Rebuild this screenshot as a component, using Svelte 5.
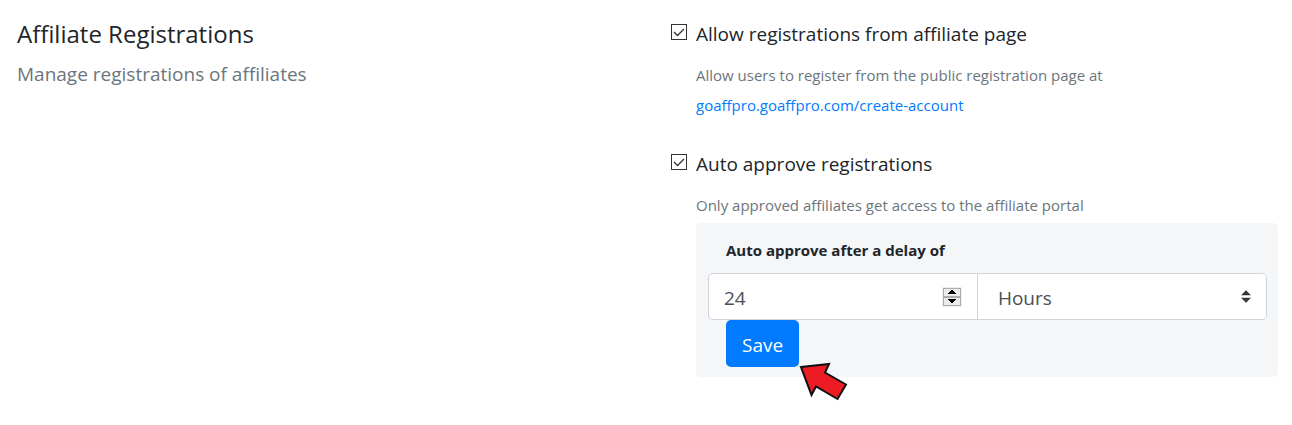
<script>
  let allowRegistrations = $state(true);
  let autoApprove = $state(true);
  let delay = $state(24);
  let unit = $state('hours');
</script>

<main class="settings">
  <section class="intro">
    <h1>Affiliate Registrations</h1>
    <p>Manage registrations of affiliates</p>
  </section>

  <form class="options" onsubmit={(event) => event.preventDefault()}>
    <div class="option">
      <input id="allow" class="check" type="checkbox" bind:checked={allowRegistrations} />
      <div class="body">
        <label class="title" for="allow">Allow registrations from affiliate page</label>
        <p class="hint">
          Allow users to register from the public registration page at<br />
          <a href="#create-account">goaffpro.goaffpro.com/create-account</a>
        </p>
      </div>
    </div>

    <div class="option">
      <input id="approve" class="check" type="checkbox" bind:checked={autoApprove} />
      <div class="body">
        <label class="title" for="approve">Auto approve registrations</label>
        <p class="hint">Only approved affiliates get access to the affiliate portal</p>
        <div class="panel">
          <label class="delay-label" for="delay">Auto approve after a delay of</label>
          <div class="group">
            <div class="number">
              <input id="delay" type="number" min="0" bind:value={delay} />
              <div class="spinner">
                <button type="button" aria-label="Increase" onclick={() => (delay += 1)}>
                  <svg viewBox="0 0 8 4" width="8" height="4"><path d="M3 0h2v1h1v1h1v1h1v1H0V3h1V2h1V1h1z" /></svg>
                </button>
                <button type="button" aria-label="Decrease" onclick={() => (delay = Math.max(0, delay - 1))}>
                  <svg viewBox="0 0 8 4" width="8" height="4"><path d="M0 0h8v1H7v1H6v1H5v1H3V3H2V2H1V1H0z" /></svg>
                </button>
              </div>
            </div>
            <div class="unit">
              <select aria-label="Delay unit" bind:value={unit}>
                <option value="hours">Hours</option>
                <option value="days">Days</option>
              </select>
              <svg class="caret" viewBox="0 0 4 5" width="10" height="13"><path d="M2 0L0 2h4zm0 5L0 3h4z" /></svg>
            </div>
          </div>
          <div class="action">
            <button class="save" type="submit">Save</button>
            <svg class="pointer" viewBox="0 0 50 40" width="50" height="40" aria-hidden="true">
              <path d="M2 3L30 0L26 8.500L47 20.500L38.500 35L17 22.500L12.500 31Z" />
            </svg>
          </div>
        </div>
      </div>
    </div>
  </form>
</main>

<style>
  :global(body) {
    margin: 0;
    background: #fff;
  }
  .settings {
    box-sizing: border-box;
    display: grid;
    grid-template-columns: 1fr 1fr;
    column-gap: 47px;
    padding: 19px 14px 24px 17px;
    color: #212529;
    font-family: "Segoe UI", "Open Sans", "Noto Sans", sans-serif;
    font-size: 19px;
    line-height: 30px;
  }
  h1, p {
    margin: 0;
    font-weight: 400;
  }
  h1 {
    margin-bottom: 10px;
    font-size: 24px;
  }
  .intro p {
    color: #6c757d;
  }
  .options {
    display: flex;
    flex-direction: column;
    gap: 29px;
    min-width: 0;
  }
  .option {
    display: flex;
    gap: 9px;
  }
  .body {
    flex: 1;
    min-width: 0;
  }
  .title {
    display: block;
    margin-bottom: 11px;
  }
  .check {
    appearance: none;
    box-sizing: border-box;
    flex: none;
    width: 16px;
    height: 16px;
    margin: 5px 0 0;
    border: 1px solid #333;
    background: #fff;
  }
  .check:checked {
    background: #fff url("data:image/svg+xml,%3Csvg xmlns='http://www.w3.org/2000/svg' viewBox='0 0 14 14'%3E%3Cpath d='M2 7l3.500 3.500L12 4' fill='none' stroke='%23333' stroke-width='1.300'/%3E%3C/svg%3E") center / 14px 14px no-repeat;
  }
  .hint {
    color: #6c757d;
    font-size: 15px;
  }
  a {
    color: #007bff;
    text-decoration: none;
  }
  .panel {
    margin-top: 3px;
    padding: 12px 11px 10px 12px;
    border-radius: 5px;
    background: #f4f6f8;
  }
  .delay-label {
    display: block;
    margin: 0 18px 8px;
    font-size: 15px;
    font-weight: 700;
  }
  .group {
    box-sizing: border-box;
    display: grid;
    grid-template-columns: minmax(0, 14fr) minmax(0, 15fr);
    height: 47px;
    border: 1px solid #ced4da;
    border-radius: 5px;
    background: #fff;
    color: #495057;
    overflow: hidden;
  }
  .number {
    box-sizing: border-box;
    display: flex;
    align-items: center;
    padding: 0 15px;
    border-right: 1px solid #ced4da;
  }
  .number input {
    appearance: textfield;
    flex: 1;
    min-width: 0;
    padding: 2px 0 0;
    border: 0;
    outline: 0;
    background: none;
    color: inherit;
    font: inherit;
  }
  .number input::-webkit-inner-spin-button {
    appearance: none;
    margin: 0;
  }
  .spinner {
    display: flex;
    flex-direction: column;
    border: 1px solid #eee;
  }
  .spinner button {
    box-sizing: border-box;
    display: flex;
    align-items: center;
    justify-content: center;
    width: 18px;
    height: 9px;
    padding: 0;
    border: 1px solid #acacac;
    background: #ebebeb;
  }
  .unit {
    display: grid;
    align-items: center;
  }
  .unit select {
    appearance: none;
    grid-area: 1 / 1;
    width: 100%;
    height: 100%;
    padding: 2px 32px 0 20px;
    border: 0;
    background: #fff;
    color: inherit;
    font: inherit;
  }
  .caret {
    grid-area: 1 / 1;
    justify-self: end;
    margin-right: 15px;
    fill: #343a40;
    pointer-events: none;
  }
  .action {
    position: relative;
    width: max-content;
    margin-left: 18px;
  }
  .save {
    display: block;
    height: 47px;
    padding: 2px 16px 0;
    border: 0;
    border-radius: 5px;
    background: #007bff;
    color: #fff;
    font: inherit;
  }
  .pointer {
    position: absolute;
    top: 44px;
    left: 73px;
    overflow: visible;
    fill: #ed1c24;
    stroke: #111;
    stroke-width: 2;
    pointer-events: none;
  }
</style>
